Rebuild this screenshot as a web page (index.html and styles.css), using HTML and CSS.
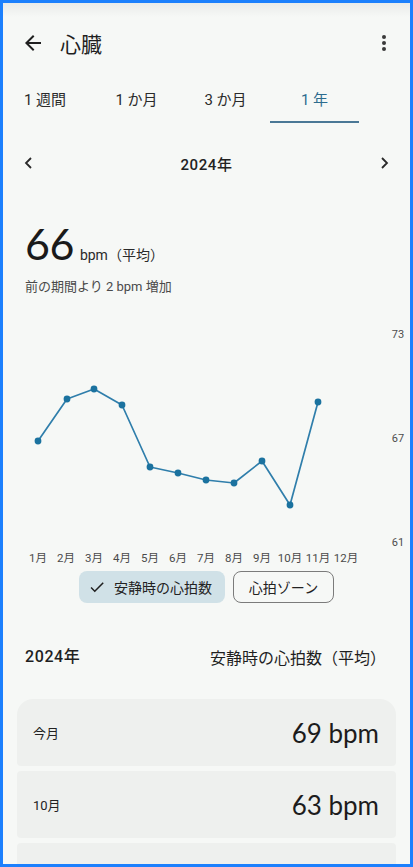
FILE: index.html
```html
<!DOCTYPE html>
<html lang="ja">
<head>
<meta charset="utf-8">
<link rel="stylesheet" href="styles.css">
</head>
<body>
<div class="app">
  <header class="topbar">
    <svg class="icon back" viewBox="0 0 24 24" width="24" height="24"><path d="M20 11H7.83l5.59-5.59L12 4l-8 8 8 8 1.41-1.41L7.83 13H20v-2z" fill="#1f1f1f"/></svg>
    <h1 class="title">心臓</h1>
    <svg class="icon more" viewBox="0 0 24 24" width="24" height="24"><circle cx="12" cy="6" r="2" fill="#3a3a3a"/><circle cx="12" cy="12" r="2" fill="#3a3a3a"/><circle cx="12" cy="18" r="2" fill="#3a3a3a"/></svg>
  </header>

  <nav class="tabs">
    <div class="tab">1 週間</div>
    <div class="tab">1 か月</div>
    <div class="tab">3 か月</div>
    <div class="tab active">1 年</div>
  </nav>

  <div class="period">
    <svg class="chev" viewBox="0 0 16 16" width="16" height="16"><path d="M10 3 5 8l5 5" fill="none" stroke="#2a2a2a" stroke-width="1.8"/></svg>
    <span class="period-label">2024年</span>
    <svg class="chev" viewBox="0 0 16 16" width="16" height="16"><path d="M6 3l5 5-5 5" fill="none" stroke="#2a2a2a" stroke-width="1.8"/></svg>
  </div>

  <div class="big">
    <span class="big-num">66</span>
    <span class="big-unit">bpm（平均）</span>
  </div>
  <p class="sub">前の期間より 2 bpm 増加</p>

  <svg class="chart" viewBox="0 0 407 272" width="407" height="272">
    <g class="ylab">
      <text x="395" y="36" text-anchor="middle">73</text>
      <text x="395" y="140" text-anchor="middle">67</text>
      <text x="395" y="244" text-anchor="middle">61</text>
    </g>
    <g class="xlab">
      <text x="35" y="260" text-anchor="middle">1月</text>
      <text x="63" y="260" text-anchor="middle">2月</text>
      <text x="91" y="260" text-anchor="middle">3月</text>
      <text x="119" y="260" text-anchor="middle">4月</text>
      <text x="147" y="260" text-anchor="middle">5月</text>
      <text x="175" y="260" text-anchor="middle">6月</text>
      <text x="203" y="260" text-anchor="middle">7月</text>
      <text x="231" y="260" text-anchor="middle">8月</text>
      <text x="259" y="260" text-anchor="middle">9月</text>
      <text x="287" y="260" text-anchor="middle">10月</text>
      <text x="315" y="260" text-anchor="middle">11月</text>
      <text x="343" y="260" text-anchor="middle">12月</text>
    </g>
    <polyline class="line" points="35,142 64,100 91,90 119,106 147,168 175,174 203,181 231,184 259,162 287,206 315,103"/>
    <g class="dots">
      <circle cx="35" cy="142" r="3.4"/>
      <circle cx="64" cy="100" r="3.4"/>
      <circle cx="91" cy="90" r="3.4"/>
      <circle cx="119" cy="106" r="3.4"/>
      <circle cx="147" cy="168" r="3.4"/>
      <circle cx="175" cy="174" r="3.4"/>
      <circle cx="203" cy="181" r="3.4"/>
      <circle cx="231" cy="184" r="3.4"/>
      <circle cx="259" cy="162" r="3.4"/>
      <circle cx="287" cy="206" r="3.4"/>
      <circle cx="315" cy="103" r="3.4"/>
    </g>
  </svg>

  <div class="chips">
    <div class="chip selected">
      <svg viewBox="0 0 24 24" width="18" height="18"><path d="M9 16.17 4.83 12l-1.42 1.41L9 19 21 7l-1.41-1.41z" fill="#1f1f1f"/></svg>
      <span>安静時の心拍数</span>
    </div>
    <div class="chip outline"><span>心拍ゾーン</span></div>
  </div>

  <div class="section-head">
    <span class="sh-left">2024年</span>
    <span class="sh-right">安静時の心拍数（平均）</span>
  </div>

  <div class="cards">
    <div class="card first">
      <span class="card-label">今月</span>
      <span class="card-value">69 bpm</span>
    </div>
    <div class="card">
      <span class="card-label">10月</span>
      <span class="card-value">63 bpm</span>
    </div>
    <div class="card"></div>
  </div>
</div>
</body>
</html>
```

FILE: styles.css
```css
* { box-sizing: border-box; }
html, body { margin: 0; padding: 0; }
body {
  width: 413px;
  height: 867px;
  overflow: hidden;
  font-family: Roboto, "Noto Sans CJK JP", sans-serif;
  color: #1f1f1f;
}
.app {
  width: 413px;
  height: 867px;
  border: 3px solid #1c80fd;
  background: linear-gradient(#e9ebea 0px, #f6f8f6 14px);
  background-color: #f6f8f6;
  overflow: hidden;
  display: flex;
  flex-direction: column;
}
.topbar {
  height: 80px;
  flex: none;
  display: flex;
  align-items: center;
  padding: 0 14px 0 18px;
}
.icon { flex: none; display: block; }
.title {
  margin: 0 0 0 15px;
  flex: 1;
  font-size: 21px;
  font-weight: 400;
  font-family: "Noto Sans CJK JP", sans-serif;
  color: #1f1f1f;
}
.tabs {
  display: flex;
  flex: none;
  height: 40px;
}
.tab {
  width: 89px;
  height: 40px;
  padding-top: 7px;
  line-height: 20px;
  text-align: center;
  font-size: 15px;
  color: #2b2b2b;
  font-family: Roboto, "Noto Sans CJK JP", sans-serif;
  border-bottom: 2px solid transparent;
}
.tab:first-child { text-indent: -5px; }
.tab.active {
  color: #2d6c8e;
  border-bottom-color: #4a7896;
}
.period {
  margin-top: 28px;
  height: 24px;
  flex: none;
  display: flex;
  align-items: center;
  justify-content: space-between;
  padding: 0 18px;
}
.period-label {
  font-family: Roboto, "Noto Sans CJK JP", sans-serif;
  font-size: 15px;
  font-weight: 500;
  color: #222;
  letter-spacing: 0.6px;
}
.big {
  margin-top: 44px;
  height: 50px;
  line-height: 50px;
  padding-left: 22px;
  flex: none;
  display: flex;
  align-items: baseline;
}
.big-num {
  font-family: Lato, sans-serif;
  font-size: 43px;
  color: #1a1a1a;
  letter-spacing: -0.5px;
}
.big-unit {
  margin-left: 6px;
  font-size: 14px;
  color: #2a2a2a;
  font-family: Roboto, "Noto Sans CJK JP", sans-serif;
}
.sub {
  margin: 9px 0 0 22px;
  font-size: 13px;
  line-height: 18px;
  color: #4a4a4a;
  flex: none;
}
.chart {
  display: block;
  flex: none;
  margin-top: 3px;
}
.ylab text {
  font-family: Roboto, sans-serif;
  font-size: 11px;
  fill: #4d4d4d;
  dominant-baseline: middle;
}
.xlab text {
  font-family: Roboto, "Noto Sans CJK JP", sans-serif;
  font-size: 11.5px;
  fill: #4a4a4a;
  dominant-baseline: middle;
}
.line {
  fill: none;
  stroke: #2f7eab;
  stroke-width: 1.7;
  stroke-linejoin: round;
}
.dots circle { fill: #1b729f; }
.chips {
  display: flex;
  justify-content: center;
  gap: 8px;
  flex: none;
}
.chip {
  height: 32px;
  border-radius: 8px;
  display: flex;
  align-items: center;
  font-size: 14px;
  color: #222;
  font-family: "Noto Sans CJK JP", sans-serif;
}
.chip.selected {
  width: 146px;
  background: #d0e1e7;
  padding-left: 9px;
  gap: 8px;
}
.chip.outline {
  width: 101px;
  border: 1px solid #7b7b7b;
  justify-content: center;
}
.section-head {
  margin-top: 43px;
  display: flex;
  justify-content: space-between;
  padding: 0 24px 0 22px;
  line-height: 22px;
  font-size: 16px;
  flex: none;
  color: #1f1f1f;
}
.sh-left {
  font-family: Roboto, "Noto Sans CJK JP", sans-serif;
  font-weight: 500;
  letter-spacing: 0.6px;
}
.sh-right { font-family: "Noto Sans CJK JP", sans-serif; }
.cards {
  margin: 31px 14px 0;
  display: flex;
  flex-direction: column;
  gap: 5px;
  flex: none;
}
.card {
  height: 67px;
  background: #eef0ee;
  border-radius: 4px;
  display: flex;
  align-items: center;
  justify-content: space-between;
  padding: 0 17px 0 16px;
}
.card.first { border-radius: 16px 16px 4px 4px; }
.card-label {
  font-size: 13px;
  color: #222;
  font-family: Roboto, "Noto Sans CJK JP", sans-serif;
}
.card-value {
  font-family: Lato, sans-serif;
  font-size: 26px;
  color: #1c1c1c;
}
```
